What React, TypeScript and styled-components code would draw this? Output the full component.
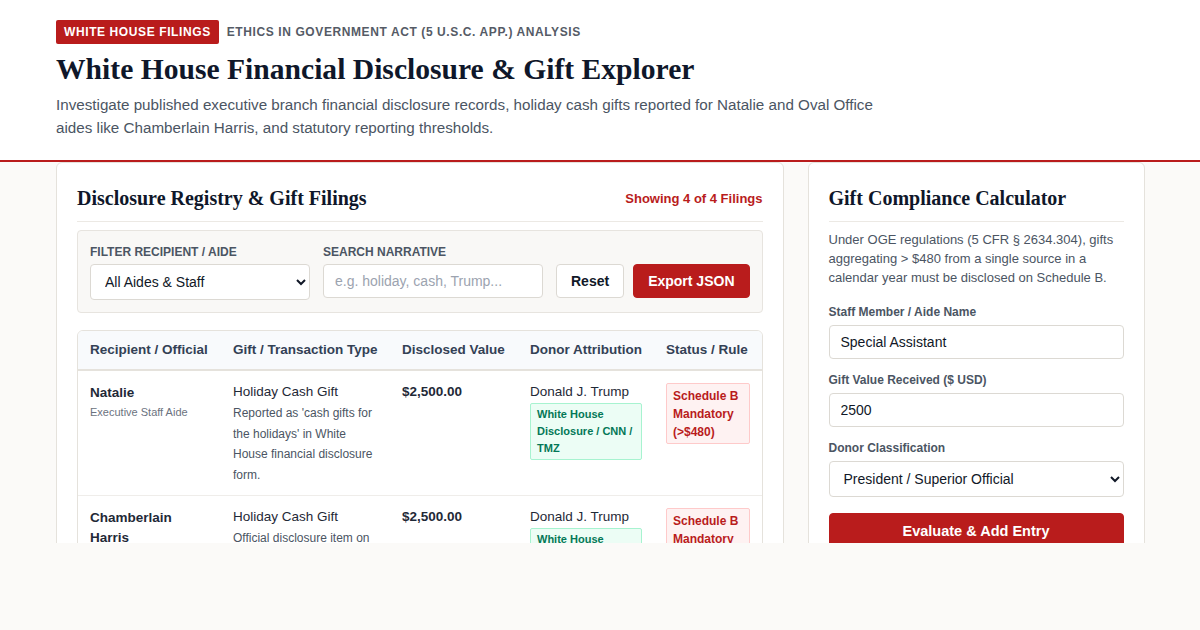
import React, { useState } from "react";
import styled, { createGlobalStyle } from "styled-components";

const GlobalStyle = createGlobalStyle`
  html, body {
    margin: 0;
    padding: 0;
    background: #fbfaf8;
  }
  body {
    font-family: "Liberation Sans", Arial, sans-serif;
    color: #1f2937;
  }
  * {
    box-sizing: border-box;
  }
`;

const Page = styled.div`
  min-height: 630px;
  background: #fbfaf8;
`;

const Masthead = styled.header`
  background: #ffffff;
  border-bottom: 2px solid #b91c1c;
  padding: 20px 56px 21px;
`;

const Kicker = styled.div`
  display: flex;
  align-items: center;
  gap: 8px;
`;

const Badge = styled.span`
  background: #b91c1c;
  color: #ffffff;
  font-size: 12px;
  font-weight: 700;
  letter-spacing: 0.6px;
  padding: 0 8px;
  height: 24px;
  line-height: 24px;
  border-radius: 2px;
`;

const KickerText = styled.span`
  color: #555b66;
  font-size: 12px;
  font-weight: 700;
  letter-spacing: 0.6px;
`;

const Title = styled.h1`
  font-family: "Liberation Serif", "Times New Roman", serif;
  font-size: 29.6px;
  font-weight: 700;
  color: #0f172a;
  margin: 8px 0 7px;
  line-height: 34px;
`;

const Lede = styled.p`
  margin: 0;
  max-width: 850px;
  font-size: 15.2px;
  line-height: 23px;
  color: #4b5563;
`;

const Main = styled.main`
  height: 381px;
  overflow: hidden;
  padding: 0 56px;
  display: grid;
  grid-template-columns: 1fr 337px;
  gap: 24px;
  align-items: start;
`;

const Card = styled.section`
  background: #ffffff;
  border: 1px solid #e5e2dc;
  border-radius: 6px;
  padding: 20px;
`;

const CardHeader = styled.div`
  display: flex;
  align-items: center;
  justify-content: space-between;
  padding: 1px 0 9px;
  border-bottom: 1px solid #ece9e4;
  margin-bottom: 8px;
`;

const CardTitle = styled.h2`
  font-family: "Liberation Serif", "Times New Roman", serif;
  font-size: 20px;
  font-weight: 700;
  color: #0f172a;
  margin: 0;
  line-height: 28px;
`;

const Count = styled.span`
  color: #b91c1c;
  font-size: 13px;
  font-weight: 700;
`;

const FilterBar = styled.div`
  display: flex;
  align-items: flex-end;
  gap: 13px;
  background: #f9f8f6;
  border: 1px solid #e7e4df;
  border-radius: 4px;
  padding: 14px 12px 12px;
  margin-bottom: 17px;
`;

const Field = styled.label`
  display: flex;
  flex-direction: column;
  align-self: flex-start;
  gap: 5px;
  width: 220px;
  flex-shrink: 0;
`;

const FieldLabel = styled.span<{ $caps?: boolean }>`
  font-size: 12px;
  line-height: 14px;
  font-weight: 700;
  color: #4b5563;
  text-transform: ${(p) => (p.$caps ? "uppercase" : "none")};
`;

const Actions = styled.div`
  display: flex;
  gap: 9px;
  padding-bottom: 2px;
`;

const Select = styled.select`
  height: 36px;
  width: 100%;
  border: 1px solid #dcd9d3;
  border-radius: 4px;
  background: #ffffff;
  font-family: "Liberation Sans", Arial, sans-serif;
  font-size: 14px;
  color: #111827;
  padding: 0 10px;
`;

const Input = styled.input`
  height: 34px;
  width: 100%;
  border: 1px solid #dcd9d3;
  border-radius: 4px;
  background: #ffffff;
  font-family: "Liberation Sans", Arial, sans-serif;
  font-size: 14px;
  color: #111827;
  padding: 0 11px;
  &::placeholder {
    color: #9ca3af;
  }
`;

const Button = styled.button<{ $primary?: boolean }>`
  height: 34px;
  border-radius: 4px;
  font-family: "Liberation Sans", Arial, sans-serif;
  font-size: 14px;
  font-weight: 700;
  padding: 0 14px;
  white-space: nowrap;
  cursor: pointer;
  border: 1px solid ${(p) => (p.$primary ? "#b91c1c" : "#dcd9d3")};
  background: ${(p) => (p.$primary ? "#b91c1c" : "#ffffff")};
  color: ${(p) => (p.$primary ? "#ffffff" : "#111827")};
`;

const TableWrap = styled.div`
  border: 1px solid #e5e2dc;
  border-radius: 6px;
  overflow: hidden;
`;

const Table = styled.table`
  width: 100%;
  border-collapse: collapse;
  table-layout: fixed;
`;

const Th = styled.th`
  background: #f8fafc;
  text-align: left;
  font-size: 13.5px;
  font-weight: 700;
  color: #334155;
  padding: 11px 12px 12px;
  border-bottom: 2px solid #e5e2dc;
  white-space: nowrap;
`;

const Tr = styled.tr`
  border-bottom: 1px solid #efedea;
`;

const Td = styled.td`
  vertical-align: top;
  padding: 12px 12px 10px;
  font-size: 13.5px;
  line-height: 18px;
  color: #1f2937;
`;

const Name = styled.div`
  font-weight: 700;
  color: #1f2937;
  line-height: 20px;
  margin-top: 0;
`;

const Role = styled.div`
  font-size: 11px;
  line-height: 16px;
  color: #6b7280;
  margin-top: 1px;
`;

const Gift = styled.div`
  line-height: 18px;
`;

const Desc = styled.div`
  margin-top: 2px;
  font-size: 12px;
  line-height: 20.5px;
  color: #4b5563;
`;

const Amount = styled.div`
  font-weight: 700;
`;

const Source = styled.div`
  margin-top: 2px;
  background: #ecfdf5;
  border: 1px solid #a7f3d0;
  border-radius: 2px;
  color: #047857;
  font-size: 11px;
  font-weight: 700;
  line-height: 17px;
  padding: 2px 6px;
`;

const Status = styled.div`
  background: #fef2f2;
  border: 1px solid #fecaca;
  border-radius: 2px;
  color: #b91c1c;
  font-size: 12px;
  font-weight: 700;
  line-height: 18px;
  padding: 3px 6px 2px;
`;

const Note = styled.p`
  margin: 0 0 18px;
  font-size: 13px;
  line-height: 19px;
  color: #4b5563;
`;

const Stack = styled.div`
  display: flex;
  flex-direction: column;
  gap: 6px;
  margin-bottom: 14px;
`;

const WideButton = styled(Button)`
  width: 100%;
  height: 36px;
  margin-top: 2px;
  font-size: 14.5px;
`;

type Filing = {
  name: string;
  role: string;
  gift: string;
  desc: string;
  value: string;
  donor: string;
  source: string;
  status: string;
};

const filings: Filing[] = [
  {
    name: "Natalie",
    role: "Executive Staff Aide",
    gift: "Holiday Cash Gift",
    desc: "Reported as 'cash gifts for the holidays' in White House financial disclosure form.",
    value: "$2,500.00",
    donor: "Donald J. Trump",
    source: "White House Disclosure / CNN / TMZ",
    status: "Schedule B Mandatory (>$480)",
  },
  {
    name: "Chamberlain Harris",
    role: "Deputy Director, Oval Office Operations",
    gift: "Holiday Cash Gift",
    desc: "Official disclosure item on annual OGE Form 278e filing.",
    value: "$2,500.00",
    donor: "Donald J. Trump",
    source: "White House Disclosure / OGE 278e",
    status: "Schedule B Mandatory (>$480)",
  },
  {
    name: "Oval Office Aide",
    role: "Staff Assistant",
    gift: "Holiday Cash Gift",
    desc: "Listed alongside other staff holiday gifts.",
    value: "$2,500.00",
    donor: "Donald J. Trump",
    source: "White House Disclosure",
    status: "Schedule B Mandatory (>$480)",
  },
  {
    name: "Executive Assistant",
    role: "Office of the President",
    gift: "Holiday Cash Gift",
    desc: "Reported in annual financial disclosure.",
    value: "$2,500.00",
    donor: "Donald J. Trump",
    source: "White House Disclosure",
    status: "Schedule B Mandatory (>$480)",
  },
];

export default function App() {
  const [aide, setAide] = useState("all");
  const [query, setQuery] = useState("");
  const [staff, setStaff] = useState("Special Assistant");
  const [amount, setAmount] = useState("2500");
  const [donor, setDonor] = useState("superior");

  return (
    <Page>
      <GlobalStyle />
      <Masthead>
        <Kicker>
          <Badge>WHITE HOUSE FILINGS</Badge>
          <KickerText>ETHICS IN GOVERNMENT ACT (5 U.S.C. APP.) ANALYSIS</KickerText>
        </Kicker>
        <Title>White House Financial Disclosure &amp; Gift Explorer</Title>
        <Lede>
          Investigate published executive branch financial disclosure records, holiday cash
          gifts reported for Natalie and Oval Office aides like Chamberlain Harris, and
          statutory reporting thresholds.
        </Lede>
      </Masthead>

      <Main>
        <Card>
          <CardHeader>
            <CardTitle>Disclosure Registry &amp; Gift Filings</CardTitle>
            <Count>Showing 4 of 4 Filings</Count>
          </CardHeader>

          <FilterBar>
            <Field>
              <FieldLabel $caps>Filter Recipient / Aide</FieldLabel>
              <Select value={aide} onChange={(e) => setAide(e.target.value)}>
                <option value="all">All Aides &amp; Staff</option>
                <option value="natalie">Natalie</option>
                <option value="harris">Chamberlain Harris</option>
              </Select>
            </Field>
            <Field>
              <FieldLabel $caps>Search Narrative</FieldLabel>
              <Input
                placeholder="e.g. holiday, cash, Trump..."
                value={query}
                onChange={(e) => setQuery(e.target.value)}
              />
            </Field>
            <Actions>
              <Button onClick={() => { setAide("all"); setQuery(""); }}>Reset</Button>
              <Button $primary>Export JSON</Button>
            </Actions>
          </FilterBar>

          <TableWrap>
            <Table>
              <colgroup>
                <col style={{ width: 143 }} />
                <col style={{ width: 169 }} />
                <col style={{ width: 128 }} />
                <col style={{ width: 136 }} />
                <col />
              </colgroup>
              <thead>
                <tr>
                  <Th>Recipient / Official</Th>
                  <Th>Gift / Transaction Type</Th>
                  <Th>Disclosed Value</Th>
                  <Th>Donor Attribution</Th>
                  <Th>Status / Rule</Th>
                </tr>
              </thead>
              <tbody>
                {filings.map((f) => (
                  <Tr key={f.name}>
                    <Td>
                      <Name>{f.name}</Name>
                      <Role>{f.role}</Role>
                    </Td>
                    <Td>
                      <Gift>{f.gift}</Gift>
                      <Desc>{f.desc}</Desc>
                    </Td>
                    <Td>
                      <Amount>{f.value}</Amount>
                    </Td>
                    <Td>
                      <Gift>{f.donor}</Gift>
                      <Source>{f.source}</Source>
                    </Td>
                    <Td>
                      <Status>{f.status}</Status>
                    </Td>
                  </Tr>
                ))}
              </tbody>
            </Table>
          </TableWrap>
        </Card>

        <Card>
          <CardHeader>
            <CardTitle>Gift Compliance Calculator</CardTitle>
          </CardHeader>
          <Note>
            Under OGE regulations (5 CFR § 2634.304), gifts aggregating &gt; $480 from a single
            source in a calendar year must be disclosed on Schedule B.
          </Note>
          <Stack>
            <FieldLabel>Staff Member / Aide Name</FieldLabel>
            <Input value={staff} onChange={(e) => setStaff(e.target.value)} />
          </Stack>
          <Stack>
            <FieldLabel>Gift Value Received ($ USD)</FieldLabel>
            <Input value={amount} onChange={(e) => setAmount(e.target.value)} />
          </Stack>
          <Stack>
            <FieldLabel>Donor Classification</FieldLabel>
            <Select value={donor} onChange={(e) => setDonor(e.target.value)}>
              <option value="superior">President / Superior Official</option>
              <option value="outside">Outside Source</option>
              <option value="family">Relative / Family</option>
            </Select>
          </Stack>
          <WideButton $primary>Evaluate &amp; Add Entry</WideButton>
        </Card>
      </Main>
    </Page>
  );
}
